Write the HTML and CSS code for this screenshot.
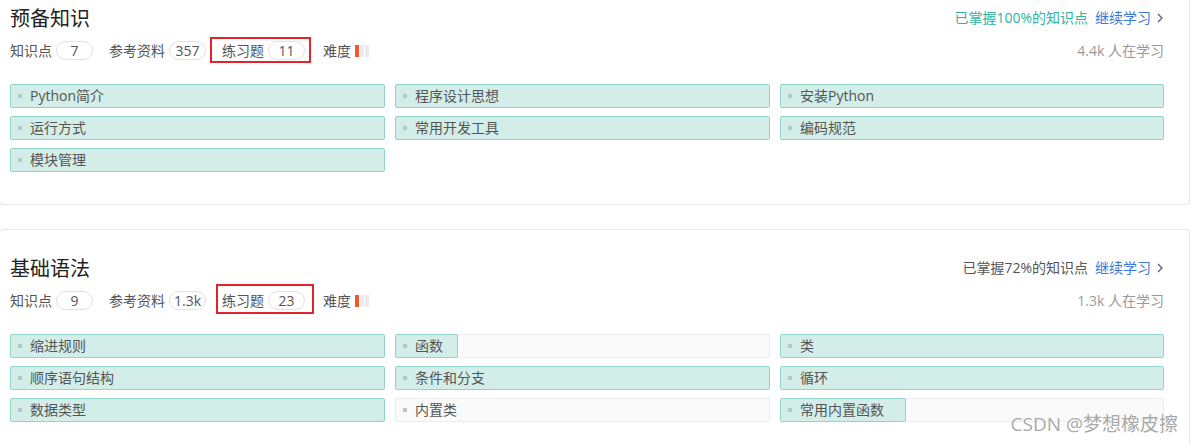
FILE: index.html
```html
<!DOCTYPE html>
<html lang="zh-CN">
<head>
<meta charset="utf-8">
<title>Python 学习路线</title>
<link rel="stylesheet" href="styles.css">
</head>
<body>
<div class="page">
  <section class="card card-first">
    <div class="head">
      <h2 class="title">预备知识</h2>
      <div class="progress-note">
        <span class="mastered mastered-full">已掌握100%的知识点</span>
        <a class="continue">继续学习<svg class="chev" width="6" height="10" viewBox="0 0 6 10"><path d="M1 1l4 4-4 4" fill="none" stroke="#56607a" stroke-width="1.3"/></svg></a>
      </div>
    </div>
    <div class="meta">
      <div class="stats">
        <span class="stat"><span class="stat-label">知识点</span><span class="pill">7</span></span>
        <span class="stat"><span class="stat-label">参考资料</span><span class="pill">357</span></span>
        <span class="stat mark mark-a"><span class="stat-label">练习题</span><span class="pill">11</span></span>
        <span class="stat"><span class="stat-label">难度</span><span class="level"><i class="on"></i><i></i><i></i></span></span>
      </div>
      <span class="learners">4.4k 人在学习</span>
    </div>
    <div class="topics">
      <div class="topic done"><span class="topic-label">Python简介</span></div>
      <div class="topic done"><span class="topic-label">程序设计思想</span></div>
      <div class="topic done"><span class="topic-label">安装Python</span></div>
      <div class="topic done"><span class="topic-label">运行方式</span></div>
      <div class="topic done"><span class="topic-label">常用开发工具</span></div>
      <div class="topic done"><span class="topic-label">编码规范</span></div>
      <div class="topic done"><span class="topic-label">模块管理</span></div>
    </div>
  </section>

  <section class="card">
    <div class="head">
      <h2 class="title">基础语法</h2>
      <div class="progress-note">
        <span class="mastered">已掌握72%的知识点</span>
        <a class="continue">继续学习<svg class="chev" width="6" height="10" viewBox="0 0 6 10"><path d="M1 1l4 4-4 4" fill="none" stroke="#56607a" stroke-width="1.3"/></svg></a>
      </div>
    </div>
    <div class="meta">
      <div class="stats">
        <span class="stat"><span class="stat-label">知识点</span><span class="pill">9</span></span>
        <span class="stat"><span class="stat-label">参考资料</span><span class="pill">1.3k</span></span>
        <span class="stat mark mark-b"><span class="stat-label">练习题</span><span class="pill">23</span></span>
        <span class="stat"><span class="stat-label">难度</span><span class="level"><i class="on"></i><i></i><i></i></span></span>
      </div>
      <span class="learners">1.3k 人在学习</span>
    </div>
    <div class="topics">
      <div class="topic done"><span class="topic-label">缩进规则</span></div>
      <div class="topic"><span class="fill" style="width:17%"></span><span class="topic-label">函数</span></div>
      <div class="topic done"><span class="topic-label">类</span></div>
      <div class="topic done"><span class="topic-label">顺序语句结构</span></div>
      <div class="topic done"><span class="topic-label">条件和分支</span></div>
      <div class="topic done"><span class="topic-label">循环</span></div>
      <div class="topic done"><span class="topic-label">数据类型</span></div>
      <div class="topic"><span class="topic-label">内置类</span></div>
      <div class="topic"><span class="fill" style="width:33%"></span><span class="topic-label">常用内置函数</span></div>
    </div>
  </section>
</div>
<div class="watermark">CSDN @梦想橡皮擦</div>
</body>
</html>
```

FILE: styles.css
```css
html, body {
  margin: 0;
  padding: 0;
  background: #fff;
}
body {
  width: 1194px;
  height: 445px;
  overflow: hidden;
  position: relative;
  font-family: "Open Sans", "Noto Sans CJK SC", sans-serif;
  color: #555;
  font-size: 14px;
}
.page {
  display: flex;
  flex-direction: column;
  gap: 24px;
}
.card {
  box-sizing: border-box;
  width: 1191px;
  margin-left: -1px;
  border: 1px solid #e6e6e6;
  border-radius: 4px;
  padding: 25px 25px 32px 10px;
}
.card-first {
  margin-top: -21px;
}
.head {
  display: flex;
  justify-content: space-between;
  align-items: center;
  height: 28px;
}
.title {
  margin: 0;
  font-size: 20px;
  line-height: 28px;
  font-weight: normal;
  color: #222;
}
.progress-note {
  display: flex;
  align-items: center;
  gap: 7px;
  line-height: 20px;
  margin-top: -3px;
  margin-right: 1px;
}
.mastered {
  color: #555;
}
.mastered-full {
  color: #2fb59d;
}
.continue {
  display: flex;
  align-items: center;
  gap: 6px;
  color: #3a78d4;
  text-decoration: none;
}
.chev {
  display: block;
}
.meta {
  margin-top: 8px;
  height: 19px;
  display: flex;
  justify-content: space-between;
  align-items: center;
}
.stats {
  display: flex;
  align-items: center;
  gap: 16px;
}
.stat {
  display: flex;
  align-items: center;
  gap: 4px;
  line-height: 19px;
  color: #555;
}
.stat:last-child {
  gap: 4px;
  margin-left: 2px;
}
.pill {
  box-sizing: border-box;
  width: 37px;
  height: 19px;
  border: 1px solid #e2e2e2;
  border-radius: 10px;
  text-align: center;
  font-size: 14px;
  line-height: 17px;
  color: #555;
}
.mark {
  position: relative;
}
.mark::after {
  content: "";
  position: absolute;
  border: 2px solid #e3232b;
}
.mark-a::after {
  left: -12px;
  right: -6px;
  top: -4px;
  bottom: -3px;
}
.mark-b::after {
  left: -6px;
  right: -9px;
  top: -7px;
  bottom: -4px;
}
.level {
  display: flex;
  gap: 1px;
}
.level i {
  display: block;
  width: 4px;
  height: 12px;
  background: #ebebeb;
}
.level i.on {
  background: #f5572b;
}
.learners {
  color: #999;
  line-height: 19px;
}
.topics {
  margin-top: 24px;
  display: grid;
  grid-template-columns: 375px 375px 1fr;
  column-gap: 10px;
  row-gap: 8px;
}
.topic {
  position: relative;
  box-sizing: border-box;
  height: 24px;
  border: 1px solid #ececec;
  background: #fafafa;
  border-radius: 2px;
  padding-left: 19px;
  display: flex;
  align-items: center;
  color: #555;
  font-size: 14px;
}
.topic.done {
  background: #d3ede9;
  border-color: #91d4c9;
}
.topic::before {
  content: "";
  position: absolute;
  z-index: 1;
  left: 7px;
  top: 50%;
  width: 4px;
  height: 4px;
  margin-top: -2px;
  background: #b6c6ca;
}
.fill {
  position: absolute;
  left: -1px;
  top: -1px;
  bottom: -1px;
  box-sizing: border-box;
  background: #d3ede9;
  border: 1px solid #91d4c9;
  border-radius: 2px;
}
.topic-label {
  position: relative;
  z-index: 1;
  line-height: 22px;
}
.watermark {
  position: absolute;
  right: 16px;
  top: 412px;
  font-size: 19px;
  line-height: 24px;
  color: #a9a9a9;
  text-shadow: 0 0 1px #fff;
}
```
